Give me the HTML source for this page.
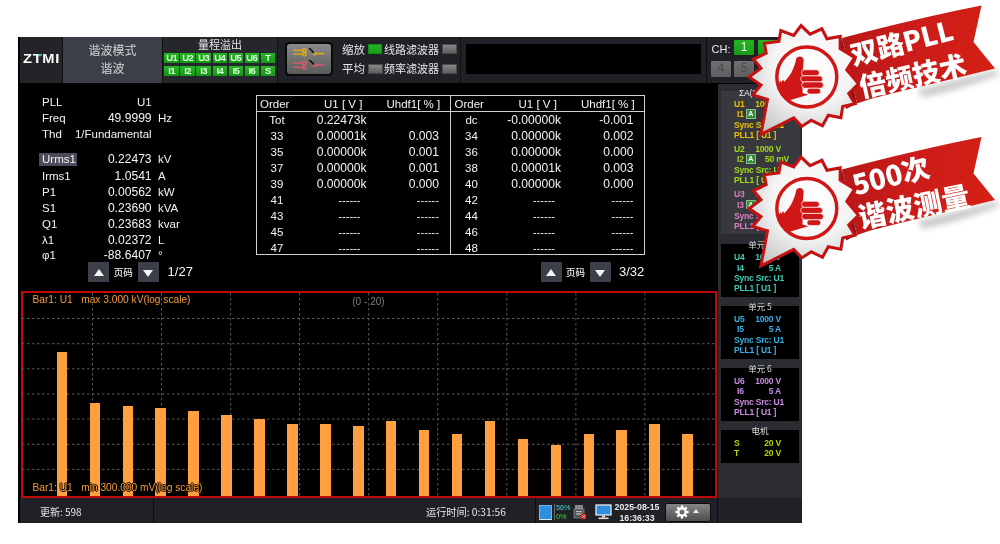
<!DOCTYPE html>
<html><head><meta charset="utf-8"><title>Harmonic</title>
<style>
*{margin:0;padding:0;box-sizing:border-box}
html,body{width:1000px;height:544px;background:#fff;overflow:hidden}
body{position:relative;font-family:"Liberation Sans","Noto Sans CJK SC",sans-serif;color:#f0f0f0}
div,span{position:absolute;white-space:nowrap}
#w{left:0;top:0;width:1000px;height:544px;will-change:transform;filter:blur(.45px)}
.cjk{font-family:"Noto Sans CJK SC","Liberation Sans",sans-serif}
.g{background:linear-gradient(#27b427,#169616);color:#dcffdc;font-size:9.5px;font-weight:bold;text-align:center;line-height:10.4px;height:9.9px;width:14.5px;letter-spacing:-.6px;overflow:hidden}
.led{width:14.8px;height:10px;background:linear-gradient(#868686,#5c5c5c);border:1px solid #4a4a4a}
.d{font-size:11.5px;color:#f4f4f4;line-height:14px;height:14px}
.r{text-align:right}
.n{font-size:12.1px}
.c{text-align:center}
.rp{font-size:8.5px;font-weight:bold;line-height:10px;height:10px;letter-spacing:-.2px}
.pg{width:21px;height:20px;background:#3c3f47}
.pg i{position:absolute;left:5.3px;top:6.5px;width:0;height:0;border-left:5.2px solid transparent;border-right:5.2px solid transparent}
.up i{border-bottom:7px solid #f4f4f4}
.dn i{border-top:7px solid #f4f4f4;top:7.5px}
.bar{background:#ff9f40;width:10.5px}
.ct{font-size:10.2px;color:#f39a3a;line-height:12px;text-shadow:1px 0 0 #000,-1px 0 0 #000,0 1px 0 #000,0 -1px 0 #000}
</style></head><body><div id="w">

<div style="left:18px;top:37px;width:783.6px;height:486.4px;background:#000"></div>
<div style="left:19.5px;top:37px;width:782px;height:46px;background:#202126"></div>
<div style="left:19.5px;top:37px;width:42.5px;height:46px;background:#232328"></div>
<div style="left:62px;top:37px;width:1px;height:46px;background:#111"></div>
<div style="left:22.7px;top:51.4px;font-size:12.3px;font-weight:bold;color:#fff;letter-spacing:.6px;transform:scaleX(1.19);transform-origin:0 0;line-height:16px">ZTMI</div>
<div style="left:37.5px;top:54.2px;width:0;height:0;border-left:2px solid transparent;border-right:2px solid transparent;border-top:3px solid #22c8b0"></div>
<div style="left:63px;top:37px;width:99px;height:46px;background:#3b3f48"></div>
<div class="cjk c" style="left:63px;width:99px;top:42px;font-size:12px;color:#d4d4d4;line-height:16px">谐波模式</div>
<div class="cjk c" style="left:63px;width:99px;top:60px;font-size:12px;color:#d4d4d4;line-height:16px">谐波</div>
<div style="left:162px;top:37px;width:1px;height:46px;background:#111"></div>
<div style="left:163px;top:37px;width:114px;height:46px;background:#25272d"></div>
<div class="cjk c" style="left:163px;width:114px;top:37px;font-size:11px;color:#e4e4e4;line-height:14px">量程溢出</div>
<div class="g" style="left:164.4px;top:52.7px">U1</div>
<div class="g" style="left:180.4px;top:52.7px">U2</div>
<div class="g" style="left:196.4px;top:52.7px">U3</div>
<div class="g" style="left:212.5px;top:52.7px">U4</div>
<div class="g" style="left:228.5px;top:52.7px">U5</div>
<div class="g" style="left:244.5px;top:52.7px">U6</div>
<div class="g" style="left:260.5px;top:52.7px">T</div>
<div class="g" style="left:164.4px;top:66.3px">I1</div>
<div class="g" style="left:180.4px;top:66.3px">I2</div>
<div class="g" style="left:196.4px;top:66.3px">I3</div>
<div class="g" style="left:212.5px;top:66.3px">I4</div>
<div class="g" style="left:228.5px;top:66.3px">I5</div>
<div class="g" style="left:244.5px;top:66.3px">I6</div>
<div class="g" style="left:260.5px;top:66.3px">S</div>
<div style="left:277px;top:37px;width:1px;height:46px;background:#111"></div>
<div style="left:285px;top:42px;width:48px;height:34px;background:#0a0a0a;border-radius:4px"></div>
<div style="left:287px;top:44px;width:44px;height:30px;border-radius:3px;background:linear-gradient(#8a8a8a,#5a5a5a)"></div>
<svg style="position:absolute;left:287px;top:44px" width="44" height="30" viewBox="0 0 44 30">
<g fill="none" stroke="#e8b000" stroke-width="1.3"><path d="M6.2 6.4H15.6M6.2 10.2H15.6"/><circle cx="17.4" cy="6.4" r="1.7"/><circle cx="17.4" cy="10.2" r="1.7"/><circle cx="27.6" cy="9.6" r="1.3"/><path d="M29 9.6H37.2"/></g>
<path d="M22.2 4L27 9" stroke="#0c0c0c" stroke-width="1.6" fill="none"/>
<g fill="none" stroke="#e8586a" stroke-width="1.3"><path d="M6.2 19.2H15.6M6.2 23.4H15.6"/><circle cx="17.4" cy="19.2" r="1.7"/><circle cx="17.4" cy="23.4" r="1.7"/><circle cx="27.6" cy="21" r="1.3"/><path d="M29 21H37.2"/></g>
<path d="M22.2 16L27 20.4" stroke="#0c0c0c" stroke-width="1.6" fill="none"/>
</svg>
<div class="cjk" style="left:342px;top:41px;font-size:11.5px;color:#e6e6e6;line-height:16px">缩放</div>
<div class="led" style="left:367.5px;top:43.7px;background:linear-gradient(#22b422,#18a018);border-color:#148c14;height:10.5px"></div>
<div class="cjk" style="left:384px;top:41px;font-size:11px;color:#e6e6e6;line-height:16px">线路滤波器</div>
<div class="led" style="left:442px;top:44px"></div>
<div class="cjk" style="left:342px;top:60px;font-size:11.5px;color:#e6e6e6;line-height:16px">平均</div>
<div class="led" style="left:368px;top:64px"></div>
<div class="cjk" style="left:384px;top:60px;font-size:11px;color:#e6e6e6;line-height:16px">频率滤波器</div>
<div class="led" style="left:442px;top:64px"></div>
<div style="left:460px;top:37px;width:1px;height:46px;background:#111"></div>
<div style="left:466px;top:43.5px;width:235px;height:30.5px;background:#000"></div>
<div style="left:706px;top:37px;width:1.3px;height:46px;background:#0c0c0c"></div>
<div style="left:711.5px;top:42px;font-size:11px;color:#e8e8e8;line-height:15px">CH:</div>
<div class="c" style="left:734px;top:40px;width:20.3px;height:15.2px;background:linear-gradient(#27b427,#179a17);color:#eaffea;font-size:12px;line-height:15.2px;border-radius:1px">1</div>
<div class="c" style="left:758px;top:40px;width:20.3px;height:15.2px;background:linear-gradient(#27b427,#179a17);color:#eaffea;font-size:12px;line-height:15.2px;border-radius:1px">2</div>
<div class="c" style="left:711px;top:61px;width:20px;height:15.6px;background:linear-gradient(#707070,#5e5e5e);color:#4c4c4c;font-size:12px;line-height:15.6px;border-radius:1px">4</div>
<div class="c" style="left:734px;top:61px;width:20px;height:15.6px;background:linear-gradient(#707070,#5e5e5e);color:#4c4c4c;font-size:12px;line-height:15.6px;border-radius:1px">5</div>
<div class="d" style="left:42px;top:94.7px">PLL</div>
<div class="d r" style="left:71px;width:80.6px;top:94.7px">U1</div>
<div class="d" style="left:42px;top:110.5px">Freq</div>
<div class="d r n" style="left:71px;width:80.6px;top:110.5px">49.9999</div>
<div class="d" style="left:158px;top:110.5px">Hz</div>
<div class="d" style="left:42px;top:126.6px">Thd</div>
<div class="d r" style="left:71px;width:80.6px;top:126.6px">1/Fundamental</div>
<div style="left:39.3px;top:152.89999999999998px;width:38px;height:12.8px;background:#4b4b5c"></div>
<div class="d" style="left:42px;top:152.2px">Urms1</div>
<div class="d r n" style="left:71px;width:80.6px;top:152.2px">0.22473</div>
<div class="d" style="left:158px;top:152.2px">kV</div>
<div class="d" style="left:42px;top:169px">Irms1</div>
<div class="d r n" style="left:71px;width:80.6px;top:169px">1.0541</div>
<div class="d" style="left:158px;top:169px">A</div>
<div class="d" style="left:42px;top:185px">P1</div>
<div class="d r n" style="left:71px;width:80.6px;top:185px">0.00562</div>
<div class="d" style="left:158px;top:185px">kW</div>
<div class="d" style="left:42px;top:201px">S1</div>
<div class="d r n" style="left:71px;width:80.6px;top:201px">0.23690</div>
<div class="d" style="left:158px;top:201px">kVA</div>
<div class="d" style="left:42px;top:216.5px">Q1</div>
<div class="d r n" style="left:71px;width:80.6px;top:216.5px">0.23683</div>
<div class="d" style="left:158px;top:216.5px">kvar</div>
<div class="d" style="left:42px;top:232.5px">λ1</div>
<div class="d r n" style="left:71px;width:80.6px;top:232.5px">0.02372</div>
<div class="d" style="left:158px;top:232.5px">L</div>
<div class="d" style="left:42px;top:248px">φ1</div>
<div class="d r n" style="left:71px;width:80.6px;top:248px">-88.6407</div>
<div class="d" style="left:158px;top:248px">°</div>
<div class="pg up" style="left:88.3px;top:262px"><i></i></div>
<div class="cjk" style="left:113.8px;top:265px;font-size:9.5px;color:#eee;line-height:14px;font-weight:500">页码</div>
<div class="pg dn" style="left:137.8px;top:262px"><i></i></div>
<div style="left:167.6px;top:264px;font-size:13px;color:#f4f4f4;line-height:16px">1/27</div>
<div class="pg up" style="left:540.6px;top:262px"><i></i></div>
<div class="cjk" style="left:566.1px;top:265px;font-size:9.5px;color:#eee;line-height:14px;font-weight:500">页码</div>
<div class="pg dn" style="left:590.1px;top:262px"><i></i></div>
<div style="left:619px;top:264px;font-size:13px;color:#f4f4f4;line-height:16px">3/32</div>
<div style="left:256px;top:95px;width:389px;height:160px;border:1px solid #cfcfcf"></div>
<div style="left:256px;top:111px;width:389px;height:1px;background:#cfcfcf"></div>
<div style="left:450px;top:95px;width:1px;height:160px;background:#cfcfcf"></div>
<div class="d" style="left:260px;top:96.5px">Order</div>
<div class="d" style="left:324px;top:96.5px">U1 [ V ]</div>
<div class="d" style="left:386.5px;top:96.5px">Uhdf1[ % ]</div>
<div class="d" style="left:454.5px;top:96.5px">Order</div>
<div class="d" style="left:518.5px;top:96.5px">U1 [ V ]</div>
<div class="d" style="left:581.0px;top:96.5px">Uhdf1[ % ]</div>
<div class="d c" style="left:257px;width:40px;top:113.0px">Tot</div>
<div class="d r n" style="left:286px;width:80.5px;top:113.0px">0.22473k</div>
<div class="d r n" style="left:378px;width:61px;top:113.0px"></div>
<div class="d c" style="left:451.5px;width:40px;top:113.0px">dc</div>
<div class="d r n" style="left:480.5px;width:80.5px;top:113.0px">-0.00000k</div>
<div class="d r n" style="left:572.5px;width:61px;top:113.0px">-0.001</div>
<div class="d c" style="left:257px;width:40px;top:128.95px">33</div>
<div class="d r n" style="left:286px;width:80.5px;top:128.95px">0.00001k</div>
<div class="d r n" style="left:378px;width:61px;top:128.95px">0.003</div>
<div class="d c" style="left:451.5px;width:40px;top:128.95px">34</div>
<div class="d r n" style="left:480.5px;width:80.5px;top:128.95px">0.00000k</div>
<div class="d r n" style="left:572.5px;width:61px;top:128.95px">0.002</div>
<div class="d c" style="left:257px;width:40px;top:144.9px">35</div>
<div class="d r n" style="left:286px;width:80.5px;top:144.9px">0.00000k</div>
<div class="d r n" style="left:378px;width:61px;top:144.9px">0.001</div>
<div class="d c" style="left:451.5px;width:40px;top:144.9px">36</div>
<div class="d r n" style="left:480.5px;width:80.5px;top:144.9px">0.00000k</div>
<div class="d r n" style="left:572.5px;width:61px;top:144.9px">0.000</div>
<div class="d c" style="left:257px;width:40px;top:160.85px">37</div>
<div class="d r n" style="left:286px;width:80.5px;top:160.85px">0.00000k</div>
<div class="d r n" style="left:378px;width:61px;top:160.85px">0.001</div>
<div class="d c" style="left:451.5px;width:40px;top:160.85px">38</div>
<div class="d r n" style="left:480.5px;width:80.5px;top:160.85px">0.00001k</div>
<div class="d r n" style="left:572.5px;width:61px;top:160.85px">0.003</div>
<div class="d c" style="left:257px;width:40px;top:176.8px">39</div>
<div class="d r n" style="left:286px;width:80.5px;top:176.8px">0.00000k</div>
<div class="d r n" style="left:378px;width:61px;top:176.8px">0.000</div>
<div class="d c" style="left:451.5px;width:40px;top:176.8px">40</div>
<div class="d r n" style="left:480.5px;width:80.5px;top:176.8px">0.00000k</div>
<div class="d r n" style="left:572.5px;width:61px;top:176.8px">0.000</div>
<div class="d c" style="left:257px;width:40px;top:192.75px">41</div>
<div class="d r n" style="left:286px;width:74.5px;top:192.75px;font-size:11.1px">------</div>
<div class="d r n" style="left:378px;width:61px;top:192.75px;font-size:11.1px">------</div>
<div class="d c" style="left:451.5px;width:40px;top:192.75px">42</div>
<div class="d r n" style="left:480.5px;width:74.5px;top:192.75px;font-size:11.1px">------</div>
<div class="d r n" style="left:572.5px;width:61px;top:192.75px;font-size:11.1px">------</div>
<div class="d c" style="left:257px;width:40px;top:208.7px">43</div>
<div class="d r n" style="left:286px;width:74.5px;top:208.7px;font-size:11.1px">------</div>
<div class="d r n" style="left:378px;width:61px;top:208.7px;font-size:11.1px">------</div>
<div class="d c" style="left:451.5px;width:40px;top:208.7px">44</div>
<div class="d r n" style="left:480.5px;width:74.5px;top:208.7px;font-size:11.1px">------</div>
<div class="d r n" style="left:572.5px;width:61px;top:208.7px;font-size:11.1px">------</div>
<div class="d c" style="left:257px;width:40px;top:224.64999999999998px">45</div>
<div class="d r n" style="left:286px;width:74.5px;top:224.64999999999998px;font-size:11.1px">------</div>
<div class="d r n" style="left:378px;width:61px;top:224.64999999999998px;font-size:11.1px">------</div>
<div class="d c" style="left:451.5px;width:40px;top:224.64999999999998px">46</div>
<div class="d r n" style="left:480.5px;width:74.5px;top:224.64999999999998px;font-size:11.1px">------</div>
<div class="d r n" style="left:572.5px;width:61px;top:224.64999999999998px;font-size:11.1px">------</div>
<div class="d c" style="left:257px;width:40px;top:240.6px">47</div>
<div class="d r n" style="left:286px;width:74.5px;top:240.6px;font-size:11.1px">------</div>
<div class="d r n" style="left:378px;width:61px;top:240.6px;font-size:11.1px">------</div>
<div class="d c" style="left:451.5px;width:40px;top:240.6px">48</div>
<div class="d r n" style="left:480.5px;width:74.5px;top:240.6px;font-size:11.1px">------</div>
<div class="d r n" style="left:572.5px;width:61px;top:240.6px;font-size:11.1px">------</div>
<div style="left:20.6px;top:290.8px;width:696.3px;height:207.3px;border:2px solid #c00a0a;background:#000"></div>
<svg style="position:absolute;left:22px;top:293px" width="693" height="203" viewBox="22 293 693 203"><line x1="92.5" y1="293" x2="92.5" y2="496" stroke="#5a5a5a" stroke-width="1" stroke-dasharray="2.5 2.5"/><line x1="161.5" y1="293" x2="161.5" y2="496" stroke="#5a5a5a" stroke-width="1" stroke-dasharray="2.5 2.5"/><line x1="230.6" y1="293" x2="230.6" y2="496" stroke="#5a5a5a" stroke-width="1" stroke-dasharray="2.5 2.5"/><line x1="299.6" y1="293" x2="299.6" y2="496" stroke="#5a5a5a" stroke-width="1" stroke-dasharray="2.5 2.5"/><line x1="368.7" y1="293" x2="368.7" y2="496" stroke="#5a5a5a" stroke-width="1" stroke-dasharray="2.5 2.5"/><line x1="437.7" y1="293" x2="437.7" y2="496" stroke="#5a5a5a" stroke-width="1" stroke-dasharray="2.5 2.5"/><line x1="506.8" y1="293" x2="506.8" y2="496" stroke="#5a5a5a" stroke-width="1" stroke-dasharray="2.5 2.5"/><line x1="575.9" y1="293" x2="575.9" y2="496" stroke="#5a5a5a" stroke-width="1" stroke-dasharray="2.5 2.5"/><line x1="644.9" y1="293" x2="644.9" y2="496" stroke="#5a5a5a" stroke-width="1" stroke-dasharray="2.5 2.5"/><line x1="22" y1="318.5" x2="715" y2="318.5" stroke="#5a5a5a" stroke-width="1" stroke-dasharray="2.5 2.5"/><line x1="22" y1="343.7" x2="715" y2="343.7" stroke="#5a5a5a" stroke-width="1" stroke-dasharray="2.5 2.5"/><line x1="22" y1="368.8" x2="715" y2="368.8" stroke="#5a5a5a" stroke-width="1" stroke-dasharray="2.5 2.5"/><line x1="22" y1="394.0" x2="715" y2="394.0" stroke="#5a5a5a" stroke-width="1" stroke-dasharray="2.5 2.5"/><line x1="22" y1="419.1" x2="715" y2="419.1" stroke="#5a5a5a" stroke-width="1" stroke-dasharray="2.5 2.5"/><line x1="22" y1="444.3" x2="715" y2="444.3" stroke="#5a5a5a" stroke-width="1" stroke-dasharray="2.5 2.5"/><line x1="22" y1="469.4" x2="715" y2="469.4" stroke="#5a5a5a" stroke-width="1" stroke-dasharray="2.5 2.5"/></svg>
<div class="bar" style="left:56.6px;top:351.6px;height:144.4px"></div>
<div class="bar" style="left:89.5px;top:403.4px;height:92.6px"></div>
<div class="bar" style="left:122.5px;top:405.8px;height:90.2px"></div>
<div class="bar" style="left:155.4px;top:408.2px;height:87.8px"></div>
<div class="bar" style="left:188.3px;top:411.0px;height:85.0px"></div>
<div class="bar" style="left:221.2px;top:415.0px;height:81.0px"></div>
<div class="bar" style="left:254.2px;top:418.7px;height:77.3px"></div>
<div class="bar" style="left:287.1px;top:423.6px;height:72.4px"></div>
<div class="bar" style="left:320.0px;top:423.6px;height:72.4px"></div>
<div class="bar" style="left:353.0px;top:426.4px;height:69.6px"></div>
<div class="bar" style="left:385.9px;top:421.2px;height:74.8px"></div>
<div class="bar" style="left:418.8px;top:429.6px;height:66.4px"></div>
<div class="bar" style="left:451.8px;top:433.7px;height:62.3px"></div>
<div class="bar" style="left:484.7px;top:421.2px;height:74.8px"></div>
<div class="bar" style="left:517.6px;top:439.0px;height:57.0px"></div>
<div class="bar" style="left:550.5px;top:445.0px;height:51.0px"></div>
<div class="bar" style="left:583.5px;top:433.7px;height:62.3px"></div>
<div class="bar" style="left:616.4px;top:429.6px;height:66.4px"></div>
<div class="bar" style="left:649.3px;top:423.6px;height:72.4px"></div>
<div class="bar" style="left:682.3px;top:433.7px;height:62.3px"></div>
<div class="ct" style="left:32.5px;top:294.2px">Bar1: U1&nbsp;&nbsp; max 3.000 kV(log scale)</div>
<div class="ct" style="left:352.2px;top:296.2px;color:#7c7c7c;font-size:10.1px">(0 - 20)</div>
<div class="ct" style="left:32.5px;top:481.5px">Bar1: U1&nbsp;&nbsp; min 300.000 mV(log scale)</div>
<div style="left:19.5px;top:498px;width:782px;height:24.6px;background:#202126"></div>
<div style="left:153px;top:498px;width:1px;height:24.6px;background:#0c0c0c"></div>
<div style="left:535px;top:498px;width:1px;height:24.6px;background:#0c0c0c"></div>
<div style="left:717px;top:498px;width:1px;height:24.6px;background:#0c0c0c"></div>
<div class="cjk" style="left:40px;top:505px;font-size:10px;color:#e6e6e6;line-height:14px">更新: 598</div>
<div class="cjk" style="left:426px;top:505px;font-size:10.2px;color:#e6e6e6;line-height:14px">运行时间: 0:31:56</div>
<div style="left:538.5px;top:505px;width:13.5px;height:14.5px;background:#2f8ee0;border:1px solid #6ab4f4;border-bottom:1.5px solid #d8e4ee"></div>
<div style="left:556px;top:504px;font-size:7.3px;color:#4ad0d0;line-height:8px">56%</div>
<div style="left:556px;top:512.5px;font-size:7.3px;color:#40d040;line-height:8px">0%</div>
<div style="left:554px;top:504px;width:1px;height:16px;background:#666"></div>
<svg style="position:absolute;left:573px;top:504px" width="14" height="17" viewBox="0 0 14 17"><rect x="2" y="1" width="8" height="4" fill="#888"/><rect x="1" y="5" width="10" height="9" fill="#555" stroke="#999" stroke-width=".6"/><rect x="3" y="7" width="6" height="1.2" fill="#bbb"/><rect x="3" y="9.5" width="6" height="1.2" fill="#bbb"/><circle cx="10.5" cy="12.5" r="3" fill="#d81818"/><path d="M9.2 11.2l2.6 2.6M11.8 11.2l-2.6 2.6" stroke="#fff" stroke-width=".9"/></svg>
<svg style="position:absolute;left:595px;top:504px" width="17" height="16" viewBox="0 0 17 16"><rect x="1" y="1" width="15" height="10" fill="#2f8ee0" stroke="#e8e8e8" stroke-width="1.3"/><rect x="7" y="11.5" width="3" height="2" fill="#ddd"/><rect x="3.5" y="13.5" width="10" height="1.6" fill="#ddd"/></svg>
<div class="c" style="left:612px;width:50px;top:502px;font-size:8.8px;font-weight:bold;color:#e8e8e8;line-height:10px">2025-08-15</div>
<div class="c" style="left:612px;width:50px;top:512.5px;font-size:8.8px;font-weight:bold;color:#e8e8e8;line-height:10px">16:36:33</div>
<div style="left:664.5px;top:503px;width:46.5px;height:19px;border-radius:2.5px;background:linear-gradient(#868686,#4e4e4e);border:1.2px solid #0e0e0e"></div>
<svg style="position:absolute;left:675px;top:505px" width="14" height="14" viewBox="-7 -7 14 14"><g fill="#fff"><rect x="-1.2" y="-6.6" width="2.4" height="3.2" transform="rotate(0)"/><rect x="-1.2" y="-6.6" width="2.4" height="3.2" transform="rotate(45)"/><rect x="-1.2" y="-6.6" width="2.4" height="3.2" transform="rotate(90)"/><rect x="-1.2" y="-6.6" width="2.4" height="3.2" transform="rotate(135)"/><rect x="-1.2" y="-6.6" width="2.4" height="3.2" transform="rotate(180)"/><rect x="-1.2" y="-6.6" width="2.4" height="3.2" transform="rotate(225)"/><rect x="-1.2" y="-6.6" width="2.4" height="3.2" transform="rotate(270)"/><rect x="-1.2" y="-6.6" width="2.4" height="3.2" transform="rotate(315)"/></g><circle r="3.6" fill="none" stroke="#fff" stroke-width="2.2"/></svg>
<div style="left:693px;top:509px;width:0;height:0;border-left:3px solid transparent;border-right:3px solid transparent;border-bottom:4px solid #eee"></div>
<div style="left:717.6px;top:84.4px;width:84px;height:414px;background:#2b2c32"></div>
<div style="left:720.5px;top:90.5px;width:79px;height:143px;background:#38393f"></div>
<div class="rp" style="left:739px;top:88px;color:#f0f0f0;font-weight:normal">ΣA(3P4W)</div>
<div class="rp" style="left:734px;top:98.5px;color:#e8c200">U1</div>
<div class="rp r" style="left:740px;width:41px;top:98.5px;color:#e8c200">1000 V</div>
<div class="rp" style="left:737px;top:109px;color:#e8c200">I1</div>
<div class="rp r" style="left:740px;width:49px;top:109px;color:#e8c200">50 mV</div>
<div style="left:746px;top:109px;width:9.5px;height:9.5px;background:#388c38;border:1px solid #86bc86;color:#fff;font-size:7px;line-height:7.5px;text-align:center;font-weight:bold">A</div>
<div class="rp" style="left:734px;top:119.5px;color:#e8c200">Sync Src: U1</div>
<div class="rp" style="left:734px;top:130px;color:#e8c200">PLL1 [ U1 ]</div>
<div class="rp" style="left:734px;top:144px;color:#a0d818">U2</div>
<div class="rp r" style="left:740px;width:41px;top:144px;color:#a0d818">1000 V</div>
<div class="rp" style="left:737px;top:154px;color:#a0d818">I2</div>
<div class="rp r" style="left:740px;width:49px;top:154px;color:#a0d818">50 mV</div>
<div style="left:746px;top:154px;width:9.5px;height:9.5px;background:#388c38;border:1px solid #86bc86;color:#fff;font-size:7px;line-height:7.5px;text-align:center;font-weight:bold">A</div>
<div class="rp" style="left:734px;top:164.5px;color:#a0d818">Sync Src: U1</div>
<div class="rp" style="left:734px;top:175px;color:#a0d818">PLL1 [ U1 ]</div>
<div class="rp" style="left:734px;top:188.5px;color:#e07cc0">U3</div>
<div class="rp r" style="left:740px;width:41px;top:188.5px;color:#e07cc0">1000 V</div>
<div class="rp" style="left:737px;top:199.5px;color:#e07cc0">I3</div>
<div class="rp r" style="left:740px;width:49px;top:199.5px;color:#e07cc0">50 mV</div>
<div style="left:746px;top:199.5px;width:9.5px;height:9.5px;background:#388c38;border:1px solid #86bc86;color:#fff;font-size:7px;line-height:7.5px;text-align:center;font-weight:bold">A</div>
<div class="rp" style="left:734px;top:210.5px;color:#e07cc0">Sync Src: U1</div>
<div class="rp" style="left:734px;top:220.5px;color:#e07cc0">PLL1 [ U1 ]</div>
<div style="left:721px;top:244px;width:78px;height:53px;background:#000"></div>
<div class="cjk c" style="left:745.0px;width:30px;top:239px;font-size:8.5px;line-height:11px;color:#ddd;background:linear-gradient(#2a2c33 45%,#000 45%)">单元 4</div>
<div class="rp" style="left:734px;top:251.5px;color:#3ccab4">U4</div>
<div class="rp r" style="left:740px;width:41px;top:251.5px;color:#3ccab4">1000 V</div>
<div class="rp" style="left:737px;top:262.5px;color:#3ccab4">I4</div>
<div class="rp r" style="left:740px;width:41px;top:262.5px;color:#3ccab4">5 A</div>
<div class="rp" style="left:734px;top:273px;color:#3ccab4">Sync Src: U1</div>
<div class="rp" style="left:734px;top:283px;color:#3ccab4">PLL1 [ U1 ]</div>
<div style="left:721px;top:306px;width:78px;height:53px;background:#000"></div>
<div class="cjk c" style="left:745.0px;width:30px;top:301px;font-size:8.5px;line-height:11px;color:#ddd;background:linear-gradient(#2a2c33 45%,#000 45%)">单元 5</div>
<div class="rp" style="left:734px;top:314px;color:#36b0e4">U5</div>
<div class="rp r" style="left:740px;width:41px;top:314px;color:#36b0e4">1000 V</div>
<div class="rp" style="left:737px;top:324px;color:#36b0e4">I5</div>
<div class="rp r" style="left:740px;width:41px;top:324px;color:#36b0e4">5 A</div>
<div class="rp" style="left:734px;top:335px;color:#36b0e4">Sync Src: U1</div>
<div class="rp" style="left:734px;top:345px;color:#36b0e4">PLL1 [ U1 ]</div>
<div style="left:721px;top:368px;width:78px;height:53px;background:#000"></div>
<div class="cjk c" style="left:745.0px;width:30px;top:363px;font-size:8.5px;line-height:11px;color:#ddd;background:linear-gradient(#2a2c33 45%,#000 45%)">单元 6</div>
<div class="rp" style="left:734px;top:375.5px;color:#c88ce0">U6</div>
<div class="rp r" style="left:740px;width:41px;top:375.5px;color:#c88ce0">1000 V</div>
<div class="rp" style="left:737px;top:386px;color:#c88ce0">I6</div>
<div class="rp r" style="left:740px;width:41px;top:386px;color:#c88ce0">5 A</div>
<div class="rp" style="left:734px;top:396.5px;color:#c88ce0">Sync Src: U1</div>
<div class="rp" style="left:734px;top:406.5px;color:#c88ce0">PLL1 [ U1 ]</div>
<div style="left:721px;top:430px;width:78px;height:33px;background:#000"></div>
<div class="cjk c" style="left:749.0px;width:22px;top:425px;font-size:8.5px;line-height:11px;color:#ddd;background:linear-gradient(#2a2c33 45%,#000 45%)">电机</div>
<div class="rp" style="left:734px;top:437.5px;color:#b6d400">S</div>
<div class="rp r" style="left:740px;width:41px;top:437.5px;color:#b6d400">20 V</div>
<div class="rp" style="left:734px;top:447.5px;color:#b6d400">T</div>
<div class="rp r" style="left:740px;width:41px;top:447.5px;color:#b6d400">20 V</div>
<svg style="position:absolute;left:0;top:0" width="1000" height="544" viewBox="0 0 1000 544"><g transform="translate(0,0)">
<defs>
<linearGradient id="rba" x1="0" y1="0" x2="1" y2="0"><stop offset="0" stop-color="#b81818"/><stop offset=".45" stop-color="#cc1c1a"/><stop offset="1" stop-color="#d42014"/></linearGradient>
<radialGradient id="sba" cx="0.58" cy="0.38" r="0.72"><stop offset="0" stop-color="#ffffff"/><stop offset=".5" stop-color="#f4f4f4"/><stop offset="1" stop-color="#c4c4c4"/></radialGradient>
<clipPath id="cca"><circle cx="806.8" cy="77" r="29"/></clipPath>
<filter id="bla" x="-20%" y="-50%" width="140%" height="200%"><feGaussianBlur stdDeviation="3"/></filter>
</defs>
<path d="M918,90 L996,70 L1000,74 Q960,90 922,97 Z" fill="#808080" opacity=".45" filter="url(#bla)"/>
<path d="M842,38 Q918,18 981.5,5.5 L973.5,42 L995,68.4 L947.8,80.1 L900,91.6 L870.4,98.9 L857,103.5 Z" fill="url(#rba)"/>
<path d="M842,38 L857,103.5 L846,109 L838,46 Z" fill="#8e1414"/>
<g font-family="'Noto Sans CJK SC','Liberation Sans',sans-serif" font-weight="900" fill="#fff">
<text x="853.5" y="65.5" font-size="27" transform="rotate(-14.3 853.5 65.5)">双路PLL</text>
<text x="861.5" y="97.5" font-size="27.3" transform="rotate(-12.3 861.5 97.5)">倍频技术</text>
</g>
<polygon points="749.1,77.0 761.0,68.2 753.6,59.1 766.2,53.2 764.4,43.2 778.9,41.5 780.8,30.6 793.7,35.5 801.1,25.6 810.0,34.2 821.9,28.8 827.0,38.8 840.2,36.4 840.1,48.6 854.6,57.6 846.8,69.9 858.5,83.8 848.7,93.5 854.9,103.8 842.7,106.6 840.9,117.7 828.3,115.2 822.5,125.8 811.3,120.3 801.8,126.4 793.7,117.8 760.9,134.5 767.5,99.4 752.9,94.9 761.0,85.1" fill="url(#sba)" stroke="#c41212" stroke-width="3" stroke-linejoin="miter"/>
<circle cx="806.8" cy="77" r="30" fill="none" stroke="#d01616" stroke-width="3.4"/>
<g clip-path="url(#cca)"><g transform="translate(770,40) scale(0.13787)">
<path d="M188,146 C188,112 244,112 244,146 L237,230 L236,385 L278,398 L160,432 L40,470 L20,310 L66,312 L76,294 L83,308 L95,287 L103,302 C140,270 172,215 188,146 Z" fill="#d01616"/>
<g fill="#d01616" stroke="#fff" stroke-width="5">
<rect x="228" y="216" width="130" height="44" rx="22"/>
<rect x="222" y="260" width="160" height="44" rx="22"/>
<rect x="230" y="304" width="158" height="46" rx="23"/>
<rect x="268" y="350" width="100" height="42" rx="21"/>
</g>
</g></g>
</g><g transform="translate(0,131.5)">
<defs>
<linearGradient id="rbb" x1="0" y1="0" x2="1" y2="0"><stop offset="0" stop-color="#b81818"/><stop offset=".45" stop-color="#cc1c1a"/><stop offset="1" stop-color="#d42014"/></linearGradient>
<radialGradient id="sbb" cx="0.58" cy="0.38" r="0.72"><stop offset="0" stop-color="#ffffff"/><stop offset=".5" stop-color="#f4f4f4"/><stop offset="1" stop-color="#c4c4c4"/></radialGradient>
<clipPath id="ccb"><circle cx="806.8" cy="77" r="29"/></clipPath>
<filter id="blb" x="-20%" y="-50%" width="140%" height="200%"><feGaussianBlur stdDeviation="3"/></filter>
</defs>
<path d="M918,90 L996,70 L1000,74 Q960,90 922,97 Z" fill="#808080" opacity=".45" filter="url(#blb)"/>
<path d="M842,38 Q918,18 981.5,5.5 L973.5,42 L995,68.4 L947.8,80.1 L900,91.6 L870.4,98.9 L857,103.5 Z" fill="url(#rbb)"/>
<path d="M842,38 L857,103.5 L846,109 L838,46 Z" fill="#8e1414"/>
<g font-family="'Noto Sans CJK SC','Liberation Sans',sans-serif" font-weight="900" fill="#fff">
<text x="855.5" y="64" font-size="27.7" transform="rotate(-14.3 855.5 64)">500次</text>
<text x="860.5" y="96.8" font-size="28.3" transform="rotate(-11.6 860.5 96.8)">谐波测量</text>
</g>
<polygon points="749.1,77.0 761.0,68.2 753.6,59.1 766.2,53.2 764.4,43.2 778.9,41.5 780.8,30.6 793.7,35.5 801.1,25.6 810.0,34.2 821.9,28.8 827.0,38.8 840.2,36.4 840.1,48.6 854.6,57.6 846.8,69.9 858.5,83.8 848.7,93.5 854.9,103.8 842.7,106.6 840.9,117.7 828.3,115.2 822.5,125.8 811.3,120.3 801.8,126.4 793.7,117.8 760.9,134.5 767.5,99.4 752.9,94.9 761.0,85.1" fill="url(#sbb)" stroke="#c41212" stroke-width="3" stroke-linejoin="miter"/>
<circle cx="806.8" cy="77" r="30" fill="none" stroke="#d01616" stroke-width="3.4"/>
<g clip-path="url(#ccb)"><g transform="translate(770,40) scale(0.13787)">
<path d="M188,146 C188,112 244,112 244,146 L237,230 L236,385 L278,398 L160,432 L40,470 L20,310 L66,312 L76,294 L83,308 L95,287 L103,302 C140,270 172,215 188,146 Z" fill="#d01616"/>
<g fill="#d01616" stroke="#fff" stroke-width="5">
<rect x="228" y="216" width="130" height="44" rx="22"/>
<rect x="222" y="260" width="160" height="44" rx="22"/>
<rect x="230" y="304" width="158" height="46" rx="23"/>
<rect x="268" y="350" width="100" height="42" rx="21"/>
</g>
</g></g>
</g></svg>
</div></body></html>
